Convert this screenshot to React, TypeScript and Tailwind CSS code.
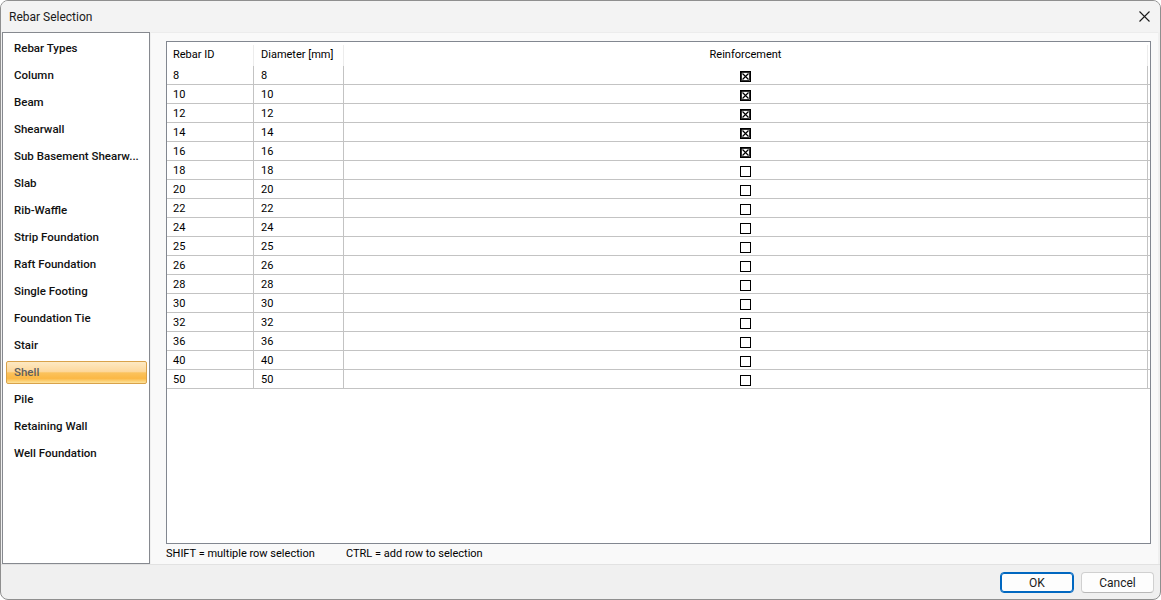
import React from "react";

const types = [
  "Rebar Types",
  "Column",
  "Beam",
  "Shearwall",
  "Sub Basement Shearw...",
  "Slab",
  "Rib-Waffle",
  "Strip Foundation",
  "Raft Foundation",
  "Single Footing",
  "Foundation Tie",
  "Stair",
  "Shell",
  "Pile",
  "Retaining Wall",
  "Well Foundation",
];

const rows: [string, boolean][] = [
  ["8", true],
  ["10", true],
  ["12", true],
  ["14", true],
  ["16", true],
  ["18", false],
  ["20", false],
  ["22", false],
  ["24", false],
  ["25", false],
  ["26", false],
  ["28", false],
  ["30", false],
  ["32", false],
  ["36", false],
  ["40", false],
  ["50", false],
];

function Check({ checked }: { checked: boolean }) {
  return (
    <svg width="11" height="11" viewBox="0 0 11 11" className="block">
      <rect x="0.5" y="0.5" width="10" height="10" fill="#fff" stroke="#000" strokeWidth="1" />
      {checked && (
        <>
          <rect x="1.5" y="1.5" width="8" height="8" fill="none" stroke="#000" strokeWidth="0.8" />
          <path d="M2.5 2.5 L8.5 8.5 M8.5 2.5 L2.5 8.5" stroke="#000" strokeWidth="1.2" />
        </>
      )}
    </svg>
  );
}

export default function App() {
  return (
    <div className="w-[1161px] h-[600px] bg-[#f0f0f0] border border-[#8f8f8f] rounded-[8px] overflow-hidden flex flex-col font-['Roboto',sans-serif] text-[11px] text-black">
      {/* Title bar */}
      <div className="h-[31px] shrink-0 bg-[#f3f3f3] flex items-center justify-between pl-[8px] pr-[10px]">
        <span className="text-[12px] text-[#1a1a1a]">Rebar Selection</span>
        <svg width="11" height="11" viewBox="0 0 11 11" className="block">
          <path d="M0.5 0.5 L10.5 10.5 M10.5 0.5 L0.5 10.5" stroke="#1a1a1a" strokeWidth="1.1" />
        </svg>
      </div>

      {/* Body */}
      <div className="h-[532px] shrink-0 flex pl-[1px] pr-[2px] gap-[1px]">
        {/* Left list */}
        <div className="w-[148px] h-full shrink-0 bg-white border border-[#86898f] pt-[2px] pl-[3px] pr-[2px] flex flex-col text-[11.5px]">
          {types.map((t) =>
            t === "Shell" ? (
              <div key={t} className="h-[27px] flex items-center">
                <div className="h-[23px] w-full flex items-center pl-[7px] rounded-[2px] border border-[#d9a24a] bg-[linear-gradient(to_bottom,#fde9c3_0%,#fdd89c_45%,#fbc25c_52%,#fbb845_78%,#fde39b_100%)] text-[#5e5e5e] font-medium">
                  {t}
                </div>
              </div>
            ) : (
              <div key={t} className="h-[27px] flex items-center pl-[8px] font-medium text-[#111]">
                {t}
              </div>
            )
          )}
        </div>

        {/* Right panel */}
        <div className="flex-1 h-full bg-[#f9f9f9] border-t border-[#ececec] pt-[8px] pl-[15px] pr-[7px] flex flex-col">
          <div className="h-[503px] shrink-0 bg-white border border-[#828790] flex flex-col">
            {/* Header */}
            <div className="h-[24px] shrink-0 flex pt-[3px]">
              <div className="w-[87px] h-full border-r border-[#ececec] flex items-center pl-[6px]">Rebar ID</div>
              <div className="w-[90px] h-full border-r border-[#ececec] flex items-center pl-[7px]">Diameter [mm]</div>
              <div className="w-[804px] h-full border-r border-[#ececec] flex items-center justify-center">Reinforcement</div>
            </div>
            {rows.map(([v, c]) => (
              <div key={v} className="h-[19px] shrink-0 flex border-b border-[#c3c3c3]">
                <div className="w-[87px] h-full border-r border-[#c3c3c3] flex items-center pl-[6px] pt-[3px]">{v}</div>
                <div className="w-[90px] h-full border-r border-[#c3c3c3] flex items-center pl-[7px] pt-[3px]">{v}</div>
                <div className="w-[804px] h-full border-r border-[#c3c3c3] flex items-center justify-center pt-[2px]">
                  <Check checked={c} />
                </div>
              </div>
            ))}
          </div>
          <div className="h-[19px] flex items-center whitespace-nowrap pt-[2px]">
            <span className="w-[180px] shrink-0">SHIFT = multiple row selection</span>
            <span>CTRL = add row to selection</span>
          </div>
        </div>
      </div>

      {/* Footer */}
      <div className="flex-1 border-t border-[#e2e2e2] flex justify-end items-start pt-[7px] pr-[6px] gap-[7px]">
        <button className="w-[74px] h-[21px] rounded-[4px] bg-[#fdfdfd] border border-[#0067c0] shadow-[inset_0_0_0_1px_#0067c0] flex items-center justify-center text-[12px] text-[#1a1a1a]">
          OK
        </button>
        <button className="w-[73px] h-[21px] rounded-[4px] bg-[#fdfdfd] border border-[#d0d0d0] border-b-[#b8b8b8] flex items-center justify-center text-[12px] text-[#1a1a1a]">
          Cancel
        </button>
      </div>
    </div>
  );
}
